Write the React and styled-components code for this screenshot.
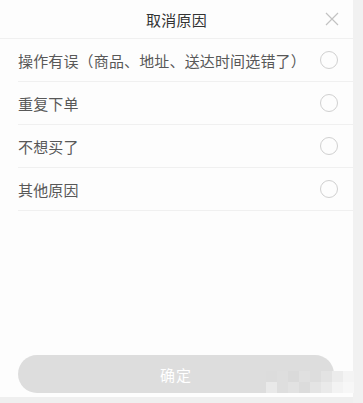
import React, { useState } from 'react';
import styled, { createGlobalStyle } from 'styled-components';

const reasons = [
  '操作有误（商品、地址、送达时间选错了）',
  '重复下单',
  '不想买了',
  '其他原因',
];

// mosaic blocks of the blurred watermark in the bottom-right corner
const mosaic = [
  { x: 0, y: 0, c: '#dcdcdc' }, { x: 11, y: 0, c: '#dedede' }, { x: 22, y: 0, c: '#dadada' },
  { x: 33, y: 0, c: '#e0e0e0' }, { x: 44, y: 0, c: '#dddddd' }, { x: 55, y: 0, c: '#e3e3e3' },
  { x: 66, y: 0, c: '#ececec' }, { x: 77, y: 0, c: '#f4f4f4' },
  { x: 0, y: 11, c: '#e9e9e9' }, { x: 11, y: 11, c: '#dedede' }, { x: 22, y: 11, c: '#e2e2e2' },
  { x: 33, y: 11, c: '#dcdcdc' }, { x: 44, y: 11, c: '#e4e4e4' }, { x: 55, y: 11, c: '#eaeaea' },
  { x: 66, y: 11, c: '#f3f3f3' }, { x: 77, y: 11, c: '#f7f7f7' },
];

const App = () => {
  const [selected, setSelected] = useState(null);

  return (
    <>
      <GlobalStyle />
      <Page>
        <Panel>
          <Header>
            <Title>取消原因</Title>
            <CloseButton aria-label="关闭">
              <svg width="14" height="14" viewBox="0 0 14 14">
                <path d="M1 1L13 13M13 1L1 13" stroke="#c2c2c2" strokeWidth="1.2" fill="none" />
              </svg>
            </CloseButton>
          </Header>

          <List>
            {reasons.map((r, i) => (
              <Row key={r} onClick={() => setSelected(i)}>
                <Label>{r}</Label>
                <Radio checked={selected === i} />
              </Row>
            ))}
          </List>

          <Footer>
            <ConfirmButton disabled={selected === null}>确定</ConfirmButton>
            <Mosaic>
              {mosaic.map((m, i) => (
                <Block key={i} style={{ left: m.x, top: m.y, background: m.c }} />
              ))}
            </Mosaic>
          </Footer>
        </Panel>
        <SideStrip />
      </Page>
    </>
  );
};

export default App;

const GlobalStyle = createGlobalStyle`
  html, body {
    margin: 0;
    padding: 0;
    background: #efefef;
  }
  body {
    font-family: "Noto Sans CJK SC", "Noto Sans", sans-serif;
  }
`;

const Page = styled.div`
  display: flex;
  width: 363px;
  height: 403px;
  background: #efefef;
`;

const Panel = styled.div`
  width: 353px;
  height: 397px;
  background: #fdfdfd;
  display: flex;
  flex-direction: column;
`;

const SideStrip = styled.div`
  flex: 1;
  background: #f1f1f1;
`;

const Header = styled.div`
  position: relative;
  height: 38px;
  display: flex;
  align-items: center;
  justify-content: center;
  border-bottom: 1px solid #f0f0f0;
`;

const Title = styled.h3`
  margin: 0;
  font-weight: 400;
  font-size: 15px;
  color: #333;
  letter-spacing: 0.3px;
`;

const CloseButton = styled.button`
  position: absolute;
  top: 12px;
  right: 14px;
  width: 14px;
  height: 14px;
  padding: 0;
  border: none;
  background: none;
  display: flex;
  cursor: pointer;
`;

const List = styled.div`
  display: flex;
  flex-direction: column;
  padding-left: 18px;
`;

const Row = styled.div`
  height: 42px;
  display: flex;
  align-items: center;
  justify-content: space-between;
  padding-right: 15px;
  border-bottom: 1px solid #f0f0f0;
  cursor: pointer;
`;

const Label = styled.span`
  font-size: 15px;
  color: #585858;
  letter-spacing: 0.15px;
`;

const Radio = styled.span`
  width: 18px;
  height: 18px;
  border-radius: 50%;
  border: 1px solid ${props => props.checked ? '#e4393c' : '#d0d0d0'};
  background: ${props => props.checked ? '#e4393c' : 'transparent'};
  box-sizing: border-box;
`;

const Footer = styled.div`
  position: relative;
  margin-top: auto;
  padding: 0 19px 4px 18px;
`;

const ConfirmButton = styled.button`
  width: 100%;
  height: 38px;
  border: none;
  border-radius: 19px;
  background: #dddddd;
  color: #fff;
  font-family: inherit;
  font-size: 15px;
  letter-spacing: 1px;
`;

const Mosaic = styled.div`
  position: absolute;
  left: 266px;
  top: 16px;
  width: 88px;
  height: 22px;
`;

const Block = styled.span`
  position: absolute;
  width: 11px;
  height: 11px;
`;
